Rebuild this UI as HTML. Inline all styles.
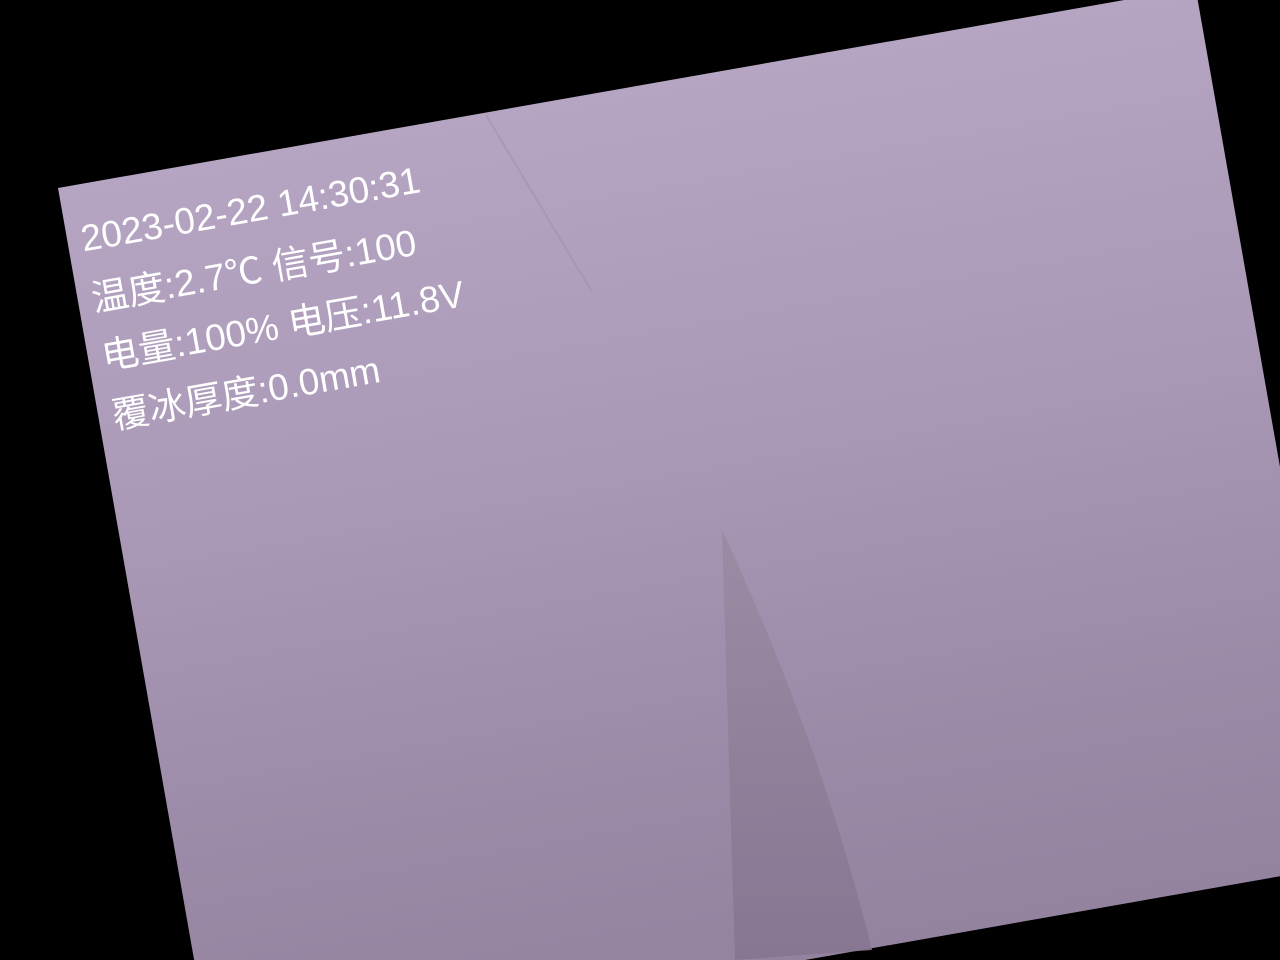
<!DOCTYPE html>
<html><head><meta charset="utf-8"><style>
html,body{margin:0;padding:0;background:#000;width:1280px;height:960px;overflow:hidden}
#wrap{position:relative;width:1280px;height:960px;overflow:hidden;background:#000}
#img{position:absolute;left:58px;top:188px;width:1155px;height:890px;transform-origin:0 0;transform:rotate(-10deg);
background:linear-gradient(180deg,#b5a5c3 0%,#a999b7 40%,#9b8ba8 75%,#93839f 100%);overflow:hidden}
.t{position:absolute;left:14px;color:#fff;font-family:"Liberation Sans","Noto Sans CJK SC",sans-serif;font-size:37px;white-space:nowrap;line-height:1}
svg{position:absolute;left:0;top:0}
</style></head><body>
<div id="wrap">
<div id="img">
<div class="t" style="top:36px">2023-02-22 14:30:31</div>
<div class="t" style="top:97px">温度:2.7℃ 信号:100</div>
<div class="t" style="top:156px">电量:100% 电压:11.8V</div>
<div class="t" style="top:216px">覆冰厚度:0.0mm</div>
</div>
<svg width="1280" height="960">
<defs><linearGradient id="c" x1="0" y1="0" x2="0" y2="1"><stop offset="0" stop-color="#9a8aa2"/><stop offset="1" stop-color="#857590"/></linearGradient></defs>
<path d="M722 530 L735 960 L872 950 Q820 740 722 530Z" fill="url(#c)" opacity="0.9"/>
<path d="M486 115 L592 292" stroke="#9e8eac" stroke-width="2" opacity="0.5"/>
</svg>
</div>
</body></html>
